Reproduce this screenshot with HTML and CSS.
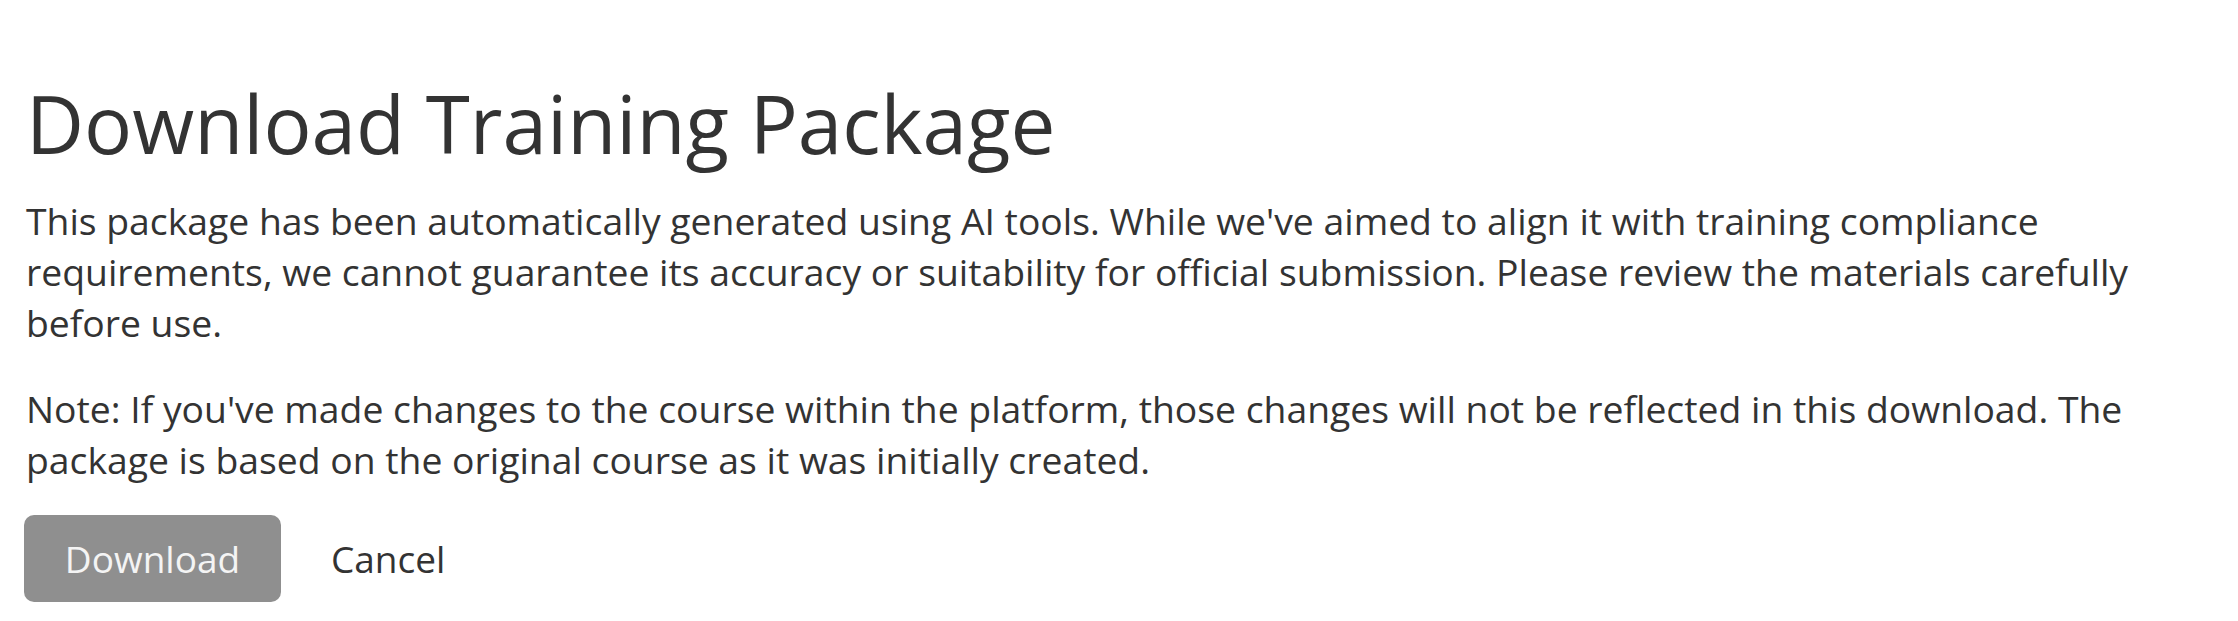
FILE: index.html
```html
<!DOCTYPE html>
<html lang="en">
<head>
<meta charset="utf-8">
<title>Download Training Package</title>
<link rel="stylesheet" href="styles.css">
</head>
<body>
<main class="dialog">
  <h1 class="title">Download Training Package</h1>
  <p class="text text-first">This package has been automatically generated using AI tools. While we've aimed to align it with training compliance requirements, we cannot guarantee its accuracy or suitability for official submission. Please review the materials carefully before use.</p>
  <p class="text text-note">Note: If you've made changes to the course within the platform, those changes will not be reflected in this download. The package is based on the original course as it was initially created.</p>
  <div class="actions">
    <button class="btn btn-primary" type="button">Download</button>
    <button class="btn btn-link" type="button">Cancel</button>
  </div>
</main>
</body>
</html>
```

FILE: styles.css
```css
html, body {
  margin: 0;
  padding: 0;
  background: #ffffff;
}

body {
  font-family: "Open Sans", "Noto Sans", sans-serif;
  color: #333333;
}

.dialog {
  padding: 75px 24px 0 26px;
}

.title {
  margin: 0;
  font-size: 80px;
  font-weight: 400;
  line-height: 96px;
  color: #333333;
}

.text {
  margin: 0;
  font-size: 37.3px;
  line-height: 51px;
}

.text-first {
  margin-top: 24px;
}

.text-note {
  margin-top: 35px;
}

.actions {
  display: flex;
  align-items: center;
  gap: 16px;
  margin-top: 30px;
  margin-left: -2px;
}

.btn {
  font-family: "Open Sans", "Noto Sans", sans-serif;
  font-size: 37px;
  border: none;
  cursor: pointer;
}

.btn-primary {
  width: 257px;
  height: 87px;
  border-radius: 10px;
  background: #8f8f8f;
  color: #f4f4f4;
}

.btn-link {
  background: transparent;
  color: #333333;
  padding: 0 34px;
}
```
